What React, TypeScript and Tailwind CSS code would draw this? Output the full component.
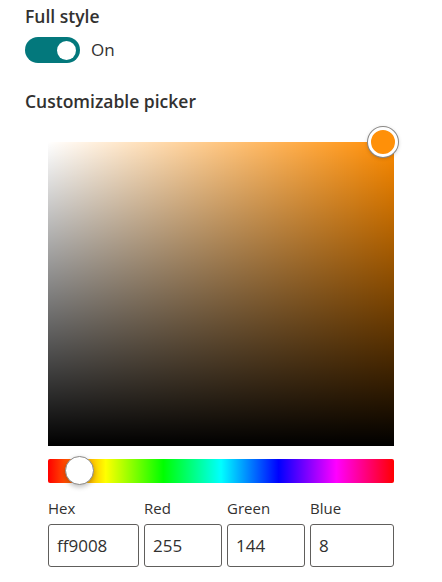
import React, { useState } from "react";

const hueGradient =
  "bg-[linear-gradient(to_right,#ff0000_0%,#ffff00_16.66%,#00ff00_33.33%,#00ffff_50%,#0000ff_66.66%,#ff00ff_83.33%,#ff0000_100%)]";

const App: React.FC = () => {
  const [on, setOn] = useState(true);

  const fields = [
    { label: "Hex", value: "ff9008", width: "w-[91px]" },
    { label: "Red", value: "255", width: "w-[78px]" },
    { label: "Green", value: "144", width: "w-[78px]" },
    { label: "Blue", value: "8", width: "w-[84px]" },
  ];

  return (
    <div className="w-[442px] h-[582px] bg-white text-[#323130] font-['Open_Sans',sans-serif] pl-[25px] pt-[5px] overflow-hidden">
      <div className="text-[17.5px] font-semibold leading-[22px]">Full style</div>

      {/* Toggle */}
      <div className="flex items-center gap-[11px] mt-[10px] h-[26px]">
        <button
          onClick={() => setOn(!on)}
          className={[
            "w-[55px] h-[26px] rounded-full flex items-center px-[4px]",
            on ? "bg-[#03787c] justify-end" : "bg-white border border-[#605e5c] justify-start",
          ].join(" ")}
        >
          <span className="block w-[19px] h-[19px] rounded-full bg-white" />
        </button>
        <span className="text-[17px] leading-[22px]">{on ? "On" : "Off"}</span>
      </div>

      <div className="text-[17.5px] font-semibold leading-[22px] mt-[27px]">Customizable picker</div>

      {/* Picker */}
      <div className="ml-[23px] mt-[30px] w-[346px]">
        <div className="relative w-[346px] h-[304px] bg-[#ff8c00]">
          <div className="absolute inset-0 bg-[linear-gradient(to_right,#ffffff,rgba(255,255,255,0))]" />
          <div className="absolute inset-0 bg-[linear-gradient(to_bottom,rgba(0,0,0,0),#000000)]" />
          <div className="absolute left-[320px] top-[-15px] w-[30px] h-[30px] rounded-full bg-[#ff9008] border-[3px] border-white ring-1 ring-[#8a8886] shadow-[0_1px_4px_rgba(0,0,0,0.25)]" />
        </div>

        <div className={`relative mt-[13px] h-[24px] rounded-[2px] ${hueGradient}`}>
          <div className="absolute left-[17px] top-[-3px] w-[29px] h-[29px] rounded-full bg-white border border-[#8a8886] shadow-[0_2px_5px_rgba(0,0,0,0.25)]" />
        </div>

        <div className="flex gap-[5px] mt-[14px]">
          {fields.map((f) => (
            <div key={f.label} className="flex flex-col">
              <label className="text-[15px] leading-[22px] h-[22px]">{f.label}</label>
              <div
                className={`${f.width} h-[43px] mt-[5px] border border-[#605e5c] rounded-[3px] flex items-center px-[8px] text-[17px]`}
              >
                {f.value}
              </div>
            </div>
          ))}
        </div>
      </div>
    </div>
  );
};

export default App;
